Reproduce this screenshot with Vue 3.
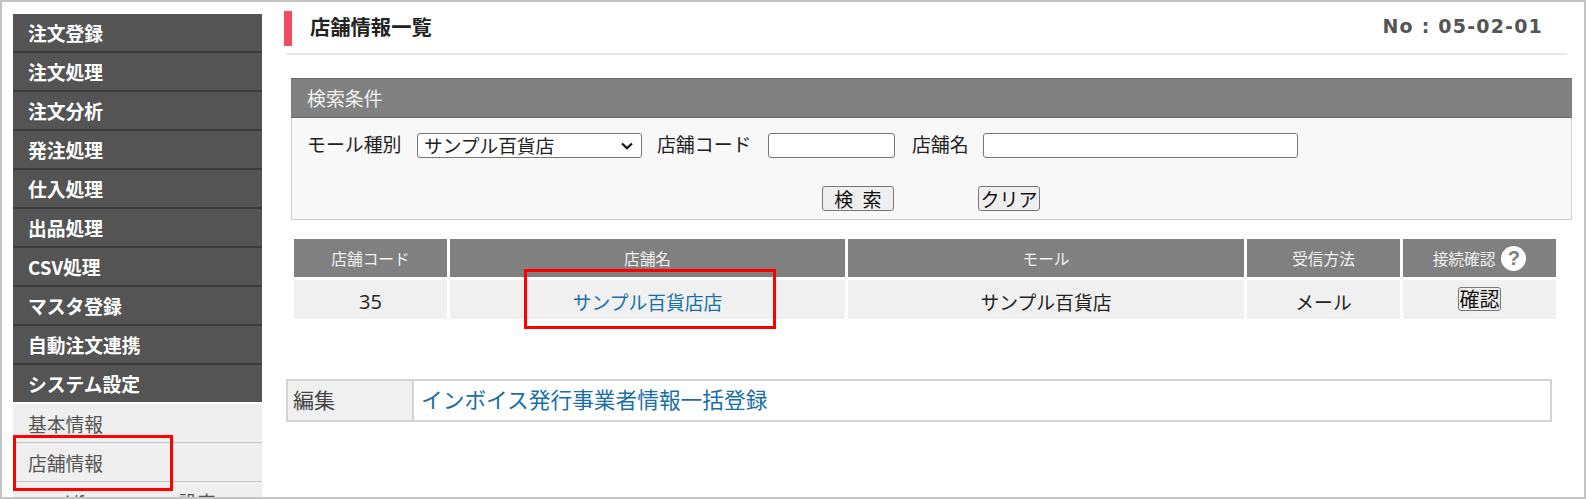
<template>
  <div class="page">
    <!-- Side menu -->
    <nav class="side-menu">
      <a v-for="item in menuItems" :key="item" class="menu-head">{{ item }}</a>
      <a v-for="item in subItems" :key="item" class="menu-sub">{{ item }}</a>
    </nav>

    <main class="content">
      <div class="title-row">
        <h1 class="page-title">店舗情報一覧</h1>
        <span class="screen-no">No : 05-02-01</span>
      </div>

      <!-- Search -->
      <section class="search-box">
        <div class="search-head">検索条件</div>
        <div class="search-fields">
          <label class="field-label">モール種別</label>
          <div class="select-wrap">
            <select class="mall-select">
              <option>サンプル百貨店</option>
            </select>
            <svg class="select-arrow" viewBox="0 0 12 8" width="12" height="8">
              <path d="M1 1.5 L6 6.2 L11 1.5" fill="none" stroke="#111" stroke-width="2.2" />
            </svg>
          </div>
          <label class="field-label">店舗コード</label>
          <input class="code-input" type="text" />
          <label class="field-label">店舗名</label>
          <input class="name-input" type="text" />
        </div>
        <div class="search-buttons">
          <button class="btn search-btn">検 索</button>
          <button class="btn clear-btn">クリア</button>
        </div>
      </section>

      <!-- Result -->
      <div class="result-grid">
        <div v-for="col in columns" :key="col" class="result-head">
          {{ col }}
          <span v-if="col === '接続確認'" class="help-icon">?</span>
        </div>
        <div class="result-cell num">35</div>
        <div class="result-cell"><a class="link">サンプル百貨店店</a></div>
        <div class="result-cell">サンプル百貨店</div>
        <div class="result-cell">メール</div>
        <div class="result-cell top"><button class="btn confirm-btn">確認</button></div>
      </div>

      <!-- Edit -->
      <div class="edit-box">
        <div class="edit-label">編集</div>
        <div class="edit-body"><a class="link">インボイス発行事業者情報一括登録</a></div>
      </div>
    </main>

    <!-- Annotations drawn over the screenshot -->
    <div class="mark mark-menu"></div>
    <div class="mark mark-shop"></div>
  </div>
</template>

<script setup>
const menuItems = [
  '注文登録',
  '注文処理',
  '注文分析',
  '発注処理',
  '仕入処理',
  '出品処理',
  'CSV処理',
  'マスタ登録',
  '自動注文連携',
  'システム設定',
]

const subItems = ['基本情報', '店舗情報', 'send/format　　 設定']

const columns = ['店舗コード', '店舗名', 'モール', '受信方法', '接続確認']
</script>

<style>
html, body { margin: 0; background: #fff; }
</style>

<style scoped>
.page {
  position: relative;
  display: flex;
  box-sizing: border-box;
  width: 1586px;
  height: 499px;
  overflow: hidden;
  background: #fff;
  border: 2px solid #c4c4c4;
  font-family: "Noto Sans CJK JP", sans-serif;
  color: #222;
}

.side-menu {
  flex: none;
  display: flex;
  flex-direction: column;
  width: 249px;
  margin: 12px 0 0 11px;
}

.menu-head {
  flex: none;
  box-sizing: border-box;
  height: 39px;
  padding-left: 15px;
  line-height: 37px;
  font-size: 18.75px;
  font-weight: 700;
  color: #fff;
  background: #545454;
  border-bottom: 2px solid #3c3c3c;
}

.menu-sub {
  flex: none;
  box-sizing: border-box;
  height: 39px;
  padding-left: 15px;
  line-height: 39px;
  font-size: 18.75px;
  color: #555;
  background: #efefef;
  border-bottom: 1px solid #c4c4c4;
}

.menu-head:nth-child(10) {
  line-height: 38px;
  border-bottom-color: #fff;
}

.content {
  flex: none;
  width: 1290px;
  margin-left: 22px;
}

.title-row {
  position: relative;
  display: flex;
  align-items: center;
  justify-content: space-between;
  box-sizing: border-box;
  width: 1281px;
  height: 44px;
  margin: 9px 0 0 2px;
  padding: 0 24px 12px 24px;
  border-bottom: 2px solid #e8e8e8;
}

.title-row::before {
  content: "";
  position: absolute;
  left: -2px;
  top: 0;
  width: 8px;
  height: 35px;
  background: #f34a63;
}

.page-title {
  margin: 0;
  font-size: 20.3px;
  font-weight: 700;
  color: #222;
}

.screen-no {
  font-family: "DejaVu Sans", sans-serif;
  font-size: 19px;
  font-weight: 700;
  letter-spacing: 1.2px;
  color: #555;
}

.search-box {
  box-sizing: border-box;
  width: 1281px;
  height: 142px;
  margin: 23px 0 0 7px;
  background: #f8f8f8;
  border: 1px solid #cfcfcf;
  border-top: none;
}

.search-head {
  box-sizing: border-box;
  height: 40px;
  margin: 0 -1px;
  padding-left: 16px;
  line-height: 38px;
  font-size: 18.9px;
  color: #f2f2f2;
  background: #808080;
  border-top: 1px solid #6a6a6a;
  border-bottom: 1px solid #6a6a6a;
}

.search-fields {
  display: flex;
  align-items: center;
  height: 25px;
  margin-top: 15px;
  padding-left: 15px;
}

.field-label {
  padding-bottom: 5px;
  font-size: 18.9px;
  color: #222;
}

.select-wrap {
  position: relative;
  box-sizing: border-box;
  width: 225px;
  height: 25px;
  margin: 0 15px 0 15.5px;
  background: #fff;
  border: 1px solid #767676;
  border-radius: 3px;
}

/* taller than its frame so the CJK line box isn't clipped */
.mall-select {
  display: block;
  appearance: none;
  box-sizing: border-box;
  width: 100%;
  height: 29px;
  margin-top: -4px;
  padding: 0 0 0 6px;
  font-family: inherit;
  font-size: 18.7px;
  color: #222;
  background: transparent;
  border: none;
  outline: none;
}

.select-arrow {
  position: absolute;
  right: 8px;
  top: 8px;
  pointer-events: none;
}

.code-input,
.name-input {
  box-sizing: border-box;
  height: 25px;
  padding: 0;
  background: #fff;
  border: 1px solid #767676;
  border-radius: 3px;
}

.code-input {
  width: 127px;
  margin: 0 17px 0 16.5px;
}

.name-input {
  width: 315px;
  margin-left: 14.3px;
}

.search-buttons {
  display: flex;
  gap: 84px;
  margin: 28px 0 0 530px;
}

.btn {
  box-sizing: border-box;
  padding: 0;
  font-family: inherit;
  color: #111;
  background: #efefef;
  border: 1px solid #767676;
  border-radius: 3px;
  cursor: pointer;
}

.search-btn {
  width: 72px;
  height: 25px;
  font-size: 19px;
  line-height: 20px;
  word-spacing: 5px;
}

.clear-btn {
  width: 62px;
  height: 25px;
  font-size: 19px;
  line-height: 20px;
}

.result-grid {
  display: grid;
  grid-template-columns: 153px 395px 396px 153px 153px;
  grid-template-rows: 38px 39px;
  gap: 3px;
  width: 1262px;
  margin: 19px 0 0 10px;
}

.result-head {
  display: flex;
  align-items: center;
  justify-content: center;
  gap: 6px;
  font-size: 15.7px;
  color: #f0f0f0;
  background: #808080;
}

.help-icon {
  display: flex;
  align-items: center;
  justify-content: center;
  width: 25px;
  height: 25px;
  border-radius: 50%;
  font-family: "Liberation Sans", sans-serif;
  font-size: 20px;
  font-weight: 700;
  color: #808080;
  background: #fff;
}

.result-cell {
  display: flex;
  align-items: center;
  justify-content: center;
  padding-top: 4px;
  box-sizing: border-box;
  font-size: 18.8px;
  color: #222;
  background: #f0f0f0;
}

.result-cell.top {
  align-items: flex-start;
  padding-top: 7px;
}

.result-cell.num {
  font-family: "Open Sans", sans-serif;
  font-size: 20px;
  font-weight: 500;
}

.link {
  color: #1a6ea8;
}

.confirm-btn {
  width: 43px;
  height: 24px;
  font-size: 20px;
  line-height: 20px;
}

.edit-box {
  display: flex;
  box-sizing: border-box;
  width: 1266px;
  height: 43px;
  margin: 60px 0 0 2px;
  border: 2px solid #d4d4d4;
}

.edit-label {
  box-sizing: border-box;
  flex: none;
  width: 126px;
  padding-left: 5px;
  line-height: 36px;
  font-size: 21px;
  color: #444;
  background: #f0f0f0;
  border-right: 2px solid #d4d4d4;
}

.edit-body {
  flex: 1;
  padding-left: 7px;
  line-height: 36px;
  font-size: 21.7px;
}

.mark {
  position: absolute;
  box-sizing: border-box;
  border: 3px solid #f00;
  pointer-events: none;
}

.mark-menu {
  left: 11px;
  top: 433px;
  width: 160px;
  height: 56px;
}

.mark-shop {
  left: 522px;
  top: 267px;
  width: 252px;
  height: 60px;
}
</style>
